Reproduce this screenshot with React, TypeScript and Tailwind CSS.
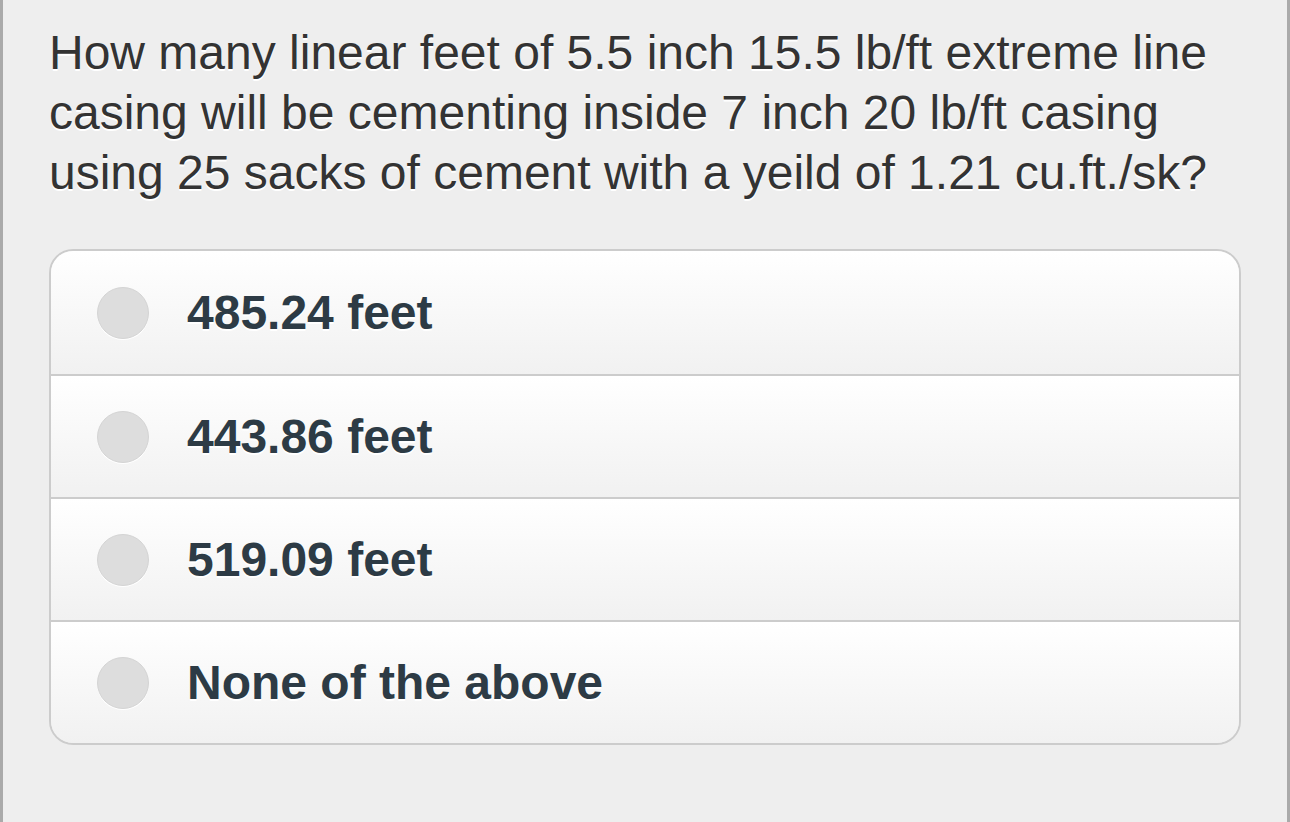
const answers = ['485.24 feet', '443.86 feet', '519.09 feet', 'None of the above']

export default function App() {
  return (
    <div
      className="h-[822px] w-[1290px] overflow-hidden border-x-[3px] border-[#aaa] bg-[#eeeeee] pl-[46px] pr-[46px] pt-[23px]"
      style={{ fontFamily: '"Liberation Sans", Arial, sans-serif' }}
    >
      <p className="text-[48px] leading-[60px] text-[#333] [text-shadow:0_2px_0_#fff]">
        How many linear feet of 5.5 inch 15.5 lb/ft extreme line casing will be cementing inside 7 inch 20 lb/ft
        casing using 25 sacks of cement with a yeild of 1.21 cu.ft./sk?
      </p>
      <ul className="mt-[46px] w-[1192px] overflow-hidden rounded-[24px] border-2 border-[#ccc]">
        {answers.map((a, i) => (
          <li
            key={a}
            className={
              'flex h-[123px] items-center bg-gradient-to-b from-white to-[#f1f1f1] pl-[46px] ' +
              (i > 0 ? 'border-t-2 border-[#ccc]' : '')
            }
          >
            <span className="h-[52px] w-[52px] shrink-0 rounded-full border border-[#d4d4d4] bg-[#dddddd] shadow-[0_1px_0_#fff]" />
            <span className="ml-[38px] text-[48px] font-bold text-[#2d3b45] [text-shadow:0_2px_0_#fff]">{a}</span>
          </li>
        ))}
      </ul>
    </div>
  )
}
